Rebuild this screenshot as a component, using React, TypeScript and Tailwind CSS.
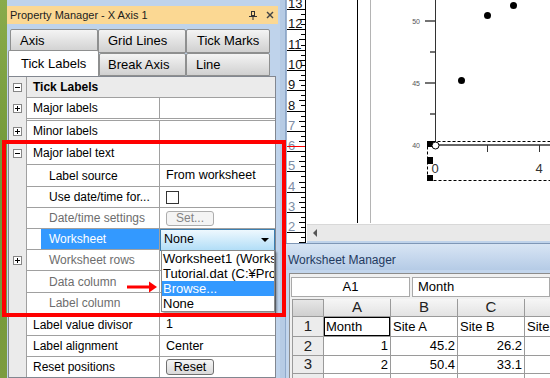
import type { ReactNode } from 'react';

type PropRow = {
  label: string;
  h: string;
  kind: 'cat' | 'top' | 'child';
  sign?: '+' | '-';
  muted?: boolean;
  selected?: boolean;
  gapBefore?: boolean;
  value?: ReactNode;
};

function Sign({ s }: { s: '+' | '-' }) {
  return (
    <span className="relative block h-[9px] w-[9px] border border-[#868686] bg-white">
      <span className="absolute left-[1px] top-[3px] h-[1px] w-[5px] bg-black" />
      {s === '+' && <span className="absolute left-[3px] top-[1px] h-[5px] w-[1px] bg-black" />}
    </span>
  );
}

const rows: PropRow[] = [
  { label: 'Tick Labels', h: 'h-[21px]', kind: 'cat', sign: '-' },
  { label: 'Major labels', h: 'h-[21px]', kind: 'top', sign: '+' },
  { label: 'Minor labels', h: 'h-[22px]', kind: 'top', sign: '+', gapBefore: true },
  { label: 'Major label text', h: 'h-[23px]', kind: 'top', sign: '-' },
  { label: 'Label source', h: 'h-[22px]', kind: 'child', value: 'From worksheet' },
  {
    label: 'Use date/time for...',
    h: 'h-[21px]',
    kind: 'child',
    value: <span className="block h-[13px] w-[13px] border border-[#333] bg-white" />,
  },
  {
    label: 'Date/time settings',
    h: 'h-[21px]',
    kind: 'child',
    muted: true,
    value: (
      <span className="flex h-[15px] w-[48px] items-center justify-center rounded-[3px] border border-[#adadad] bg-[#f4f4f4] text-[12px] text-[#838383]">
        Set...
      </span>
    ),
  },
  {
    label: 'Worksheet',
    h: 'h-[21px]',
    kind: 'child',
    selected: true,
    value: (
      <div className="-ml-[6px] -mb-[1px] flex h-[22px] flex-1 items-center border border-[#3c7fb1] bg-gradient-to-b from-[#eef8fe] to-[#b2def7] pl-[3px] text-[12.5px]">
        None
        <span className="ml-auto mr-[5px] h-0 w-0 border-x-[4px] border-t-[4px] border-x-transparent border-t-black" />
      </div>
    ),
  },
  { label: 'Worksheet rows', h: 'h-[21px]', kind: 'child', sign: '+', muted: true },
  { label: 'Data column', h: 'h-[22px]', kind: 'child', muted: true },
  { label: 'Label column', h: 'h-[21px]', kind: 'child', muted: true },
  { label: 'Label value divisor', h: 'h-[22px]', kind: 'top', value: '1' },
  { label: 'Label alignment', h: 'h-[21px]', kind: 'top', value: 'Center' },
  {
    label: 'Reset positions',
    h: 'h-[21px]',
    kind: 'top',
    value: (
      <span className="flex h-[16px] w-[48px] items-center justify-center rounded-[3px] border border-[#707070] bg-gradient-to-b from-[#f6f6f6] to-[#d9d9d9] text-[12.5px]">
        Reset
      </span>
    ),
  },
];

function GridRow({ row }: { row: PropRow }) {
  if (row.kind === 'cat') {
    return (
      <div className={`flex ${row.h} bg-[#ebebeb]`}>
        <div className="flex w-[18px] items-center justify-center border-r border-[#a0a0a0]">
          {row.sign && <Sign s={row.sign} />}
        </div>
        <div className="flex flex-1 items-center border-b border-[#a0a0a0] pl-[6px] font-bold">{row.label}</div>
      </div>
    );
  }
  return (
    <>
      {row.gapBefore && (
        <div className="flex h-[1px]">
          <div className="w-[18px] border-r border-[#a0a0a0] bg-[#ebebeb]" />
        </div>
      )}
      <div className={`flex ${row.h}`}>
        <div className="flex w-[18px] items-center justify-center border-r border-[#a0a0a0] bg-[#ebebeb]">
          {row.sign && <Sign s={row.sign} />}
        </div>
        <div className={`flex flex-1 border-b border-[#a0a0a0] ${row.gapBefore ? 'border-t' : ''}`}>
          <div className="flex w-[133px] border-r border-[#a0a0a0]">
            {row.kind === 'child' ? (
              <div
                className={`ml-[14px] flex flex-1 items-center pl-[8px] ${
                  row.selected ? 'bg-[#3399ff] text-white' : row.muted ? 'text-[#6d6d6d]' : ''
                }`}
              >
                {row.label}
              </div>
            ) : (
              <div className="flex flex-1 items-center pl-[6px]">{row.label}</div>
            )}
          </div>
          <div className="flex flex-1 items-center pl-[6px] text-[12.5px]">{row.value}</div>
        </div>
      </div>
    </>
  );
}

function Tab({ label, w, pl, active }: { label: string; w: string; pl: string; active?: boolean }) {
  return (
    <div
      className={`flex items-center rounded-t-[2px] border-x border-t border-[#8e8f8f] text-[13px] ${w} ${pl} ${
        active ? 'relative z-10 -mt-[3px] h-[26px] bg-white' : 'border-b bg-gradient-to-b from-[#f4f4f4] to-[#d0d0d0]'
      }`}
    >
      {label}
    </div>
  );
}

function PropertyManager() {
  return (
    <div className="flex w-[273px] shrink-0 flex-col">
      <div className="h-[6px]" />
      <div className="mr-[2px] flex h-[18px] items-center bg-[#fbd893] pl-[3px] text-[11px] text-[#1d1d1d]">
        Property Manager - X Axis 1
        <svg width="8" height="9" viewBox="0 0 8 9" className="ml-auto mr-[9px]" fill="none" stroke="#333">
          <rect x="2.5" y="0.5" width="3" height="4" />
          <line x1="0" y1="5.5" x2="8" y2="5.5" />
          <line x1="4" y1="5.5" x2="4" y2="9" />
        </svg>
        <svg width="8" height="8" viewBox="0 0 8 8" className="mr-[4px]" stroke="#444" strokeWidth="1.4">
          <line x1="1" y1="1" x2="7" y2="7" />
          <line x1="7" y1="1" x2="1" y2="7" />
        </svg>
      </div>
      <div className="h-[52px] pt-[5px]">
        <div className="ml-[3px] flex h-[24px]">
          <Tab label="Axis" w="w-[88px]" pl="pl-[9px]" />
          <Tab label="Grid Lines" w="w-[88px]" pl="pl-[9px]" />
          <Tab label="Tick Marks" w="w-[84px]" pl="pl-[10px]" />
        </div>
        <div className="ml-[1px] flex h-[23px]">
          <Tab label="Tick Labels" w="w-[91px]" pl="pl-[12px]" active />
          <Tab label="Break Axis" w="w-[87px]" pl="pl-[8px]" />
          <Tab label="Line" w="w-[84px]" pl="pl-[9px]" />
        </div>
      </div>
      <div className="ml-[1px] w-[268px] flex-1 overflow-hidden border border-[#828790] bg-white text-[12px]">
        {rows.map((r) => (
          <GridRow key={r.label} row={r} />
        ))}
      </div>
    </div>
  );
}

function Ruler() {
  const majors = Array.from({ length: 12 }, (_, i) => ({ n: 13 - i, y: 9 + i * 20.3 }));
  const minors: number[] = [];
  majors.forEach((m) => {
    for (let k = 1; k < 4; k++) minors.push(m.y + k * 5.07);
  });
  return (
    <svg width="21" height="243" className="block bg-white">
      <rect x="0" y="0" width="1" height="243" fill="#9fb4cf" />
      <line x1="19.5" y1="0" x2="19.5" y2="243" stroke="#000" />
      {minors.map((y, i) => (
        <line
          key={i}
          x1={i % 3 === 1 ? 13 : 15}
          y1={Math.round(y) + 0.5}
          x2="19"
          y2={Math.round(y) + 0.5}
          stroke="#000"
        />
      ))}
      {majors.map((m) => (
        <g key={m.n}>
          <line x1="1" y1={Math.round(m.y) + 0.5} x2="19" y2={Math.round(m.y) + 0.5} stroke="#000" />
          <text
            x="2"
            y={Math.round(m.y) - 1}
            fontSize="13"
            fill={m.n > 7 ? '#111' : '#7d8ca3'}
            fontFamily="Liberation Sans, Arial, sans-serif"
          >
            {m.n}
          </text>
        </g>
      ))}
      <line x1="1" y1="146.5" x2="19" y2="146.5" stroke="#ff0000" />
    </svg>
  );
}

function Graph() {
  return (
    <svg width="243" height="224" className="block bg-white" fontFamily="Liberation Sans, Arial, sans-serif">
      <line x1="50.5" y1="0" x2="50.5" y2="223" stroke="#000" />
      <line x1="63.5" y1="0" x2="63.5" y2="223" stroke="#b4b4b4" />
      <line x1="128.5" y1="0" x2="128.5" y2="145" stroke="#333" />
      <line x1="118" y1="21" x2="128" y2="21" stroke="#444" strokeWidth="1.5" />
      <line x1="118" y1="83" x2="128" y2="83" stroke="#444" strokeWidth="1.5" />
      <line x1="123" y1="52" x2="128" y2="52" stroke="#444" strokeWidth="1.5" />
      <line x1="123" y1="114" x2="128" y2="114" stroke="#444" strokeWidth="1.5" />
      <text x="113" y="24" fontSize="7" textAnchor="end" fill="#555">50</text>
      <text x="113" y="86" fontSize="7" textAnchor="end" fill="#555">45</text>
      <text x="113" y="148" fontSize="7" textAnchor="end" fill="#555">40</text>
      <line x1="128" y1="145" x2="243" y2="145" stroke="#333" strokeWidth="1.5" />
      <line x1="180.5" y1="145" x2="180.5" y2="152" stroke="#333" />
      <line x1="232.5" y1="145" x2="232.5" y2="152" stroke="#333" />
      <rect x="120.5" y="141.5" width="140" height="39" fill="none" stroke="#000" strokeDasharray="3 2" />
      <rect x="120" y="141" width="6" height="6" fill="#000" />
      <rect x="120" y="157" width="6" height="7" fill="#000" />
      <rect x="120" y="175" width="6" height="6" fill="#000" />
      <circle cx="128.5" cy="145.5" r="3.5" fill="#fff" stroke="#000" />
      <text x="128" y="173" fontSize="13" textAnchor="middle" fill="#333">0</text>
      <text x="232" y="173" fontSize="13" textAnchor="middle" fill="#333">4</text>
      <circle cx="154.5" cy="80.5" r="3.5" fill="#000" />
      <circle cx="180.5" cy="15.5" r="3.5" fill="#000" />
      <circle cx="206.5" cy="5.5" r="3.5" fill="#000" />
    </svg>
  );
}

const colW = ['w-[32px]', 'w-[67px]', 'w-[67px]', 'w-[67px]', 'w-[67px]'];

const sheet: { h: string; n: string; cells: { t: string; right?: boolean }[] }[] = [
  { h: 'h-[20px]', n: '1', cells: [{ t: 'Month' }, { t: 'Site A' }, { t: 'Site B' }, { t: 'Site C' }] },
  { h: 'h-[19px]', n: '2', cells: [{ t: '1', right: true }, { t: '45.2', right: true }, { t: '26.2', right: true }, { t: '' }] },
  { h: 'h-[18px]', n: '3', cells: [{ t: '2', right: true }, { t: '50.4', right: true }, { t: '33.1', right: true }, { t: '' }] },
  { h: 'h-[19px]', n: '4', cells: [{ t: '' }, { t: '' }, { t: '' }, { t: '' }] },
];

function WorksheetManager() {
  return (
    <div className="flex flex-1 flex-col">
      <div className="flex h-[27px] items-center border-t border-[#7f97b6] bg-gradient-to-b from-[#d8e5f4] to-[#b5cbe6] pl-[2px] pt-[6px] text-[12px] text-[#1f3a5f]">
        Worksheet Manager
      </div>
      <div className="flex-1 bg-[#c2d5ec] pl-[3px] pt-[3px]">
        <div className="h-full overflow-hidden border-l border-t border-[#8c8c8c] bg-[#f0f0f0] pl-[1px] pt-[3px]">
          <div className="flex h-[20px] gap-[2px] text-[13px]">
            <div className="flex w-[119px] items-center justify-center border border-[#a9a9a9] bg-white">A1</div>
            <div className="flex flex-1 items-center border border-[#a9a9a9] bg-white pl-[5px]">Month</div>
          </div>
          <div className="ml-[1px] mt-[2px] whitespace-nowrap">
            <div className="flex h-[18px]">
              <div className={`${colW[0]} shrink-0 border border-[#9a9a9a] bg-gradient-to-b from-[#e6e6e6] to-[#cfcfcf]`} />
              {['A', 'B', 'C', 'D'].map((c, i) => (
                <div
                  key={c}
                  className={`${colW[i + 1]} flex shrink-0 items-center justify-center border-b border-r border-[#9a9a9a] bg-gradient-to-b from-[#f6f6f6] to-[#e3e3e3] text-[15px] text-[#222]`}
                >
                  {c}
                </div>
              ))}
            </div>
            {sheet.map((r) => (
              <div key={r.n} className={`flex ${r.h}`}>
                <div
                  className={`${colW[0]} flex shrink-0 items-center justify-center border-x border-b border-[#9a9a9a] bg-[#ececec] text-[15px] text-[#222]`}
                >
                  {r.n}
                </div>
                {r.cells.map((c, i) => (
                  <div
                    key={i}
                    className={`${colW[i + 1]} relative flex shrink-0 items-center overflow-hidden border-b border-r border-[#9a9a9a] bg-white px-[2px] text-[13px] ${
                      c.right ? 'justify-end' : ''
                    }`}
                  >
                    {c.t}
                    {r.n === '1' && i === 0 && (
                      <span className="absolute -left-[1px] -top-[1px] bottom-[-1px] right-[-1px] border-2 border-black" />
                    )}
                  </div>
                ))}
              </div>
            ))}
          </div>
        </div>
      </div>
    </div>
  );
}

export default function App() {
  return (
    <div className="relative flex h-[378px] w-[550px] overflow-hidden bg-[#bfd3eb] font-['Liberation_Sans',Arial,sans-serif] text-[12px] text-black">
      <div className="w-[7px] shrink-0 bg-gradient-to-b from-[#89ab4c] via-[#6f9637] to-[#7c9c40]" />
      <PropertyManager />
      <div className="w-[6px] shrink-0 border-r border-[#8fa9ca] bg-[#b6cbe4]" />
      <div className="flex w-[264px] flex-col">
        <div className="flex h-[243px]">
          <Ruler />
          <div className="flex flex-1 flex-col">
            <Graph />
            <div className="flex h-[17px] items-center border-t border-[#d8d8d8] bg-[#e9e9e9] pl-[6px]">
              <span className="h-0 w-0 border-y-[4px] border-r-[4px] border-y-transparent border-r-[#555]" />
            </div>
          </div>
        </div>
        <WorksheetManager />
      </div>

      <div className="pointer-events-none absolute left-[161px] top-[250px] w-[114px] border border-[#8a8a8a] bg-white text-[13px] leading-[15px] shadow-[2px_2px_2px_rgba(0,0,0,0.35)]">
        <div className="overflow-hidden whitespace-nowrap pl-[1px]">Worksheet1 (Worksheet1)</div>
        <div className="overflow-hidden whitespace-nowrap pl-[1px]">Tutorial.dat (C:¥Program Files)</div>
        <div className="bg-[#3399ff] pl-[1px] text-white">Browse...</div>
        <div className="pl-[1px]">None</div>
      </div>

      <div className="pointer-events-none absolute left-[2px] top-[140px] h-[177px] w-[284px] border-4 border-[#ff0000]" />

      <svg width="32" height="12" viewBox="0 0 32 12" className="pointer-events-none absolute left-[127px] top-[281px]">
        <rect x="0" y="4.5" width="24" height="3" fill="#ff0000" />
        <polygon points="22,0.5 30,6 22,11.5" fill="#ff0000" />
      </svg>
    </div>
  );
}
